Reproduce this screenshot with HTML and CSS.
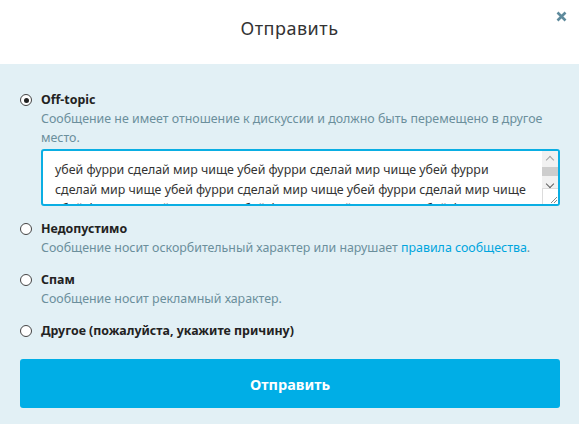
FILE: index.html
```html
<!DOCTYPE html>
<html lang="ru">
<head>
  <meta charset="UTF-8">
  <meta name="viewport" content="width=device-width, initial-scale=1.0">
  <title>Отправить</title>
  <link rel="stylesheet" href="styles.css">
</head>
<body>
  <div class="modal">
    <div class="modal-head">
      <h2 class="modal-title">Отправить</h2>
      <button class="close" aria-label="Закрыть">
        <svg width="11" height="11" viewBox="0 0 11 11">
          <path d="M1.5 1.5 L9.5 9.5 M9.5 1.5 L1.5 9.5" stroke="#5e8a9c" stroke-width="2.6" stroke-linecap="butt"/>
        </svg>
      </button>
    </div>

    <form class="modal-body">
      <div class="option">
        <span class="radio checked"></span>
        <div class="option-text">
          <div class="option-title">Off-topic</div>
          <div class="option-desc">Сообщение не имеет отношение к дискуссии и должно быть перемещено в другое место.</div>
          <div class="reason">
            <div class="reason-text">
              <div class="reason-line">убей фурри сделай мир чище убей фурри сделай мир чище убей фурри</div>
              <div class="reason-line">сделай мир чище убей фурри сделай мир чище убей фурри сделай мир чище</div>
              <div class="reason-line">убей фурри сделай мир чище убей фурри сделай мир чище убей фурри</div>
            </div>
            <div class="scrollbar">
              <span class="arrow up"></span>
              <span class="thumb"></span>
              <span class="arrow down"></span>
              <span class="grip">
                <svg width="8" height="8" viewBox="0 0 8 8">
                  <path d="M7 1 L1 7 M7 4 L4 7" stroke="#888" stroke-width="1"/>
                </svg>
              </span>
            </div>
          </div>
        </div>
      </div>

      <div class="option">
        <span class="radio"></span>
        <div class="option-text">
          <div class="option-title">Недопустимо</div>
          <div class="option-desc">Сообщение носит оскорбительный характер или нарушает <a href="#">правила сообщества</a>.</div>
        </div>
      </div>

      <div class="option">
        <span class="radio"></span>
        <div class="option-text">
          <div class="option-title">Спам</div>
          <div class="option-desc">Сообщение носит рекламный характер.</div>
        </div>
      </div>

      <div class="option">
        <span class="radio"></span>
        <div class="option-text">
          <div class="option-title">Другое (пожалуйста, укажите причину)</div>
        </div>
      </div>

      <button type="button" class="submit">Отправить</button>
    </form>
  </div>
</body>
</html>
```

FILE: styles.css
```css
body {
  margin: 0;
  font-family: "Noto Sans", "Open Sans", sans-serif;
  color: #222;
  background: #e2f0f5;
}
.modal {
  width: 579px;
  height: 424px;
  display: flex;
  flex-direction: column;
}
.modal-head {
  height: 64px;
  background: #fff;
  display: flex;
  align-items: center;
  justify-content: center;
  position: relative;
}
.modal-title {
  margin: 0 0 8px;
  font-size: 18px;
  font-weight: 400;
  letter-spacing: 0.5px;
  color: #333;
}
.close {
  position: absolute;
  top: 10px;
  right: 12px;
  padding: 0;
  border: none;
  background: none;
  cursor: pointer;
}
.modal-body {
  flex: 1;
  background: #e2f0f5;
  padding: 26px 19px 0 20px;
  display: flex;
  flex-direction: column;
  gap: 13px;
}
.option {
  display: flex;
  align-items: flex-start;
  gap: 9px;
  font-size: 12.4px;
  line-height: 19px;
}
.radio {
  width: 10px;
  height: 10px;
  margin-top: 4px;
  border: 1px solid #444;
  border-radius: 50%;
  background: #fff;
  position: relative;
  flex-shrink: 0;
}
.radio.checked::after {
  content: "";
  position: absolute;
  top: 2.5px;
  left: 2.5px;
  width: 5px;
  height: 5px;
  border-radius: 50%;
  background: #222;
}
.option-text {
  flex: 1;
  min-width: 0;
}
.option-title {
  font-weight: 700;
  color: #222;
}
.option-desc {
  color: #6b8f9c;
}
.option-desc a {
  color: #00a5de;
  text-decoration: none;
}
.reason {
  margin-top: 2px;
  height: 53px;
  border: 2px solid #0aaee3;
  border-radius: 3px;
  background: #fff;
  display: flex;
  overflow: hidden;
}
.reason-text {
  flex: 1;
  min-width: 0;
  padding: 9px 0 0 12px;
  color: #333;
  line-height: 19.5px;
  white-space: nowrap;
  overflow: hidden;
}
.scrollbar {
  width: 16px;
  background: #f1f1f1;
  display: flex;
  flex-direction: column;
  align-items: center;
}
.arrow {
  width: 5px;
  height: 5px;
  border-left: 1.5px solid #a3a3a3;
  border-top: 1.5px solid #a3a3a3;
}
.arrow.up {
  margin-top: 6px;
  transform: rotate(45deg);
}
.arrow.down {
  margin-top: 5px;
  border-color: #606060;
  transform: rotate(225deg);
}
.thumb {
  width: 16px;
  height: 9px;
  margin-top: 4px;
  background: #cdcdcd;
}
.grip {
  margin-top: auto;
  width: 15px;
  height: 15px;
  border-top: 1px solid #dcdcdc;
  border-left: 1px solid #dcdcdc;
  background: #fff;
  display: flex;
  align-items: flex-end;
  justify-content: flex-end;
}
.submit {
  margin-top: 6px;
  height: 49px;
  border: none;
  border-radius: 3px;
  background: #00aee6;
  color: #fff;
  font-family: inherit;
  font-size: 14.5px;
  font-weight: 700;
  cursor: pointer;
}
```
